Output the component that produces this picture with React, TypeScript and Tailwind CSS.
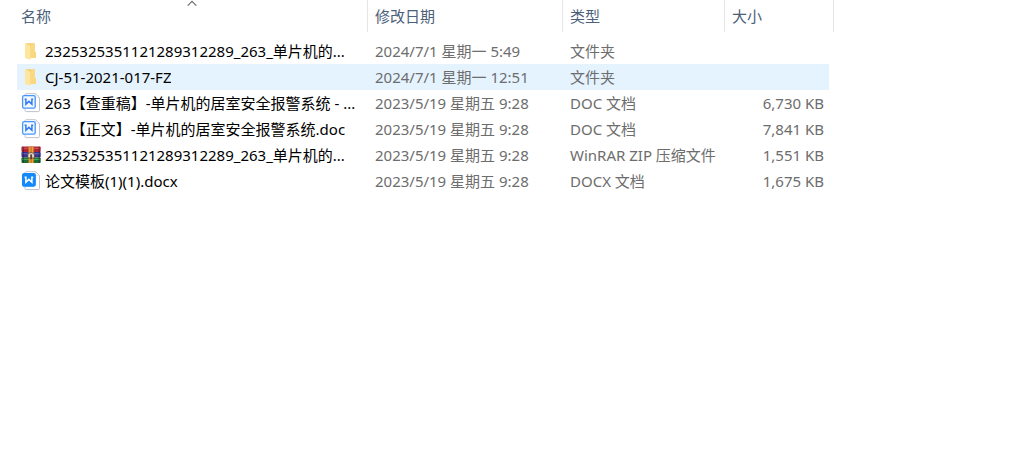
import { ReactNode } from 'react';
import clsx from 'clsx';

type FileKind = 'folder' | 'doc' | 'docx' | 'zip';

interface FileItem {
    name: string;
    modified: string;
    type: string;
    size?: string;
    kind: FileKind;
    hovered?: boolean;
}

const files: FileItem[] = [
    { name: '2325325351121289312289_263_单片机的...', modified: '2024/7/1 星期一 5:49', type: '文件夹', kind: 'folder' },
    { name: 'CJ-51-2021-017-FZ', modified: '2024/7/1 星期一 12:51', type: '文件夹', kind: 'folder', hovered: true },
    { name: '263【查重稿】-单片机的居室安全报警系统 - ...', modified: '2023/5/19 星期五 9:28', type: 'DOC 文档', size: '6,730 KB', kind: 'doc' },
    { name: '263【正文】-单片机的居室安全报警系统.doc', modified: '2023/5/19 星期五 9:28', type: 'DOC 文档', size: '7,841 KB', kind: 'doc' },
    { name: '2325325351121289312289_263_单片机的...', modified: '2023/5/19 星期五 9:28', type: 'WinRAR ZIP 压缩文件', size: '1,551 KB', kind: 'zip' },
    { name: '论文模板(1)(1).docx', modified: '2023/5/19 星期五 9:28', type: 'DOCX 文档', size: '1,675 KB', kind: 'docx' },
];

function FolderIcon() {
    return (
        <svg viewBox="0 0 20 20" className="h-5 w-5 shrink-0" aria-hidden="true">
            <path d="M5 2.2H13.6V10.5L15 11.5V17H6Z" fill="#f3cc6c" />
            <path d="M10 2.2H13.6V10.8L14.9 11.7V17H10Z" fill="#f8d880" />
            <path d="M4 2.2L8.4 4Q9.6 4.5 9.6 5.6V19L4 17Z" fill="#ffe69e" />
        </svg>
    );
}

// doc: 흰 배경에 파란 테두리, docx: 파란 배경
function WpsIcon({ filled }: { filled?: boolean }) {
    return (
        <svg viewBox="0 0 20 20" className="h-5 w-5 shrink-0" fill="none" aria-hidden="true">
            <path d="M4 3V1.8Q4 0.7 5.2 0.7H14.6L18.5 4.6V17.4Q18.5 18.6 17.3 18.6H5.2Q4 18.6 4 17.4V16" fill="#fff" stroke="#b7bcc6" strokeWidth="0.9" />
            <path d="M14.6 0.9V4.6H18.3" stroke="#d5d8de" strokeWidth="0.6" />
            <rect x="1.6" y="2.6" width="12.6" height="12.6" rx="1.6" fill={filled ? '#1389fb' : '#f3f8ff'} stroke={filled ? '#1389fb' : '#4595ff'} strokeWidth="1.3" />
            <path d="M3.6 6.3H4.9V11.2L7.9 8.4L10.9 11.2V6.3H12.2" stroke={filled ? '#fff' : '#2f7bf0'} strokeWidth="1.5" />
        </svg>
    );
}

function RarIcon() {
    return (
        <svg viewBox="0 0 20 20" className="h-5 w-5 shrink-0" aria-hidden="true">
            <rect x="0.5" y="1.6" width="19.2" height="5.4" rx="0.8" fill="#b02637" />
            <rect x="0.5" y="2.8" width="19.2" height="1.2" fill="#d84a50" />
            <rect x="0.5" y="7" width="19.2" height="5.4" rx="0.8" fill="#37348f" />
            <rect x="0.5" y="8.2" width="19.2" height="1.2" fill="#6461c0" />
            <rect x="0.5" y="12.4" width="19.2" height="5.6" rx="0.8" fill="#1b6d31" />
            <rect x="0.5" y="13.8" width="19.2" height="1.2" fill="#45a552" />
            <path d="M2.2 1.8V17.8M18.2 1.8V17.8" stroke="#1c1c2c" strokeWidth="0.6" />
            <rect x="7.4" y="1.6" width="5.4" height="16.4" fill="#cf7f27" />
            <path d="M8.8 1.6V18M11.6 1.6V18" stroke="#efb24e" strokeWidth="0.8" />
            <path d="M6.8 13V10Q6.8 7.6 10.1 7.6Q13.4 7.6 13.4 10V13Z" fill="#eadfca" stroke="#59432f" strokeWidth="0.8" />
            <rect x="9.2" y="9.4" width="1.9" height="4.8" fill="#5b422c" />
        </svg>
    );
}

const icons: Record<FileKind, ReactNode> = {
    folder: <FolderIcon />,
    doc: <WpsIcon />,
    docx: <WpsIcon filled />,
    zip: <RarIcon />,
};

function SortArrow() {
    return (
        <svg viewBox="0 0 10 6" className="absolute left-1/2 top-0 h-[6px] w-[10px] -translate-x-1/2" fill="none" aria-hidden="true">
            <path d="M0.7 5.7L5 1.4L9.3 5.7" stroke="#6e6e6e" strokeWidth="1.1" />
        </svg>
    );
}

const headClass = 'h-8 border-r border-[#e5e5e5] p-0 font-normal';
const headButton = 'h-8 w-full pl-[7px] text-left text-[#4c607a]';

export default function App() {
    return (
        <main className="bg-white pl-[17px] pr-[190px] font-['Noto_Sans','Noto_Sans_CJK_SC',sans-serif] text-[15px] leading-5">
            <table className="w-full table-fixed border-separate border-spacing-0">
                <colgroup>
                    <col />
                    <col className="w-[195px]" />
                    <col className="w-[162px]" />
                    <col className="w-[104px]" />
                    <col className="w-[5px]" />
                </colgroup>
                <thead>
                    <tr>
                        <th scope="col" aria-sort="ascending" className={headClass}>
                            <button type="button" className="relative h-8 w-full pl-1 pr-1 text-left text-[#4c607a]">
                                <SortArrow />
                                名称
                            </button>
                        </th>
                        <th scope="col" className={headClass}>
                            <button type="button" className={headButton}>修改日期</button>
                        </th>
                        <th scope="col" className={headClass}>
                            <button type="button" className={headButton}>类型</button>
                        </th>
                        <th scope="col" colSpan={2} className={headClass}>
                            <button type="button" className={headButton}>大小</button>
                        </th>
                    </tr>
                </thead>
                {/* 헤더와 목록 사이 여백 */}
                <tbody className="before:block before:h-[6px] before:content-['']">
                    {files.map((file, index) => {
                        const cell = clsx('h-[26px] whitespace-nowrap p-0', file.hovered && 'bg-[#e5f3ff]');
                        return (
                            <tr key={index}>
                                <td className={cell}>
                                    <div className="flex items-center gap-1 pl-1 text-black">
                                        {icons[file.kind]}
                                        <span className="truncate">{file.name}</span>
                                    </div>
                                </td>
                                <td className={clsx(cell, 'pl-[7px] text-[#6d6d6d]')}>{file.modified}</td>
                                <td className={clsx(cell, 'pl-[7px] text-[#6d6d6d]')}>{file.type}</td>
                                <td className={clsx(cell, 'pr-[5px] text-right text-[#6d6d6d]')}>{file.size}</td>
                                <td className="p-0" />
                            </tr>
                        );
                    })}
                </tbody>
            </table>
        </main>
    );
}
